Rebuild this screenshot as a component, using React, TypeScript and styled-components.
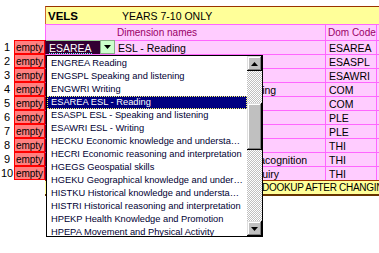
import React from 'react';
import styled, { createGlobalStyle } from 'styled-components';

const GlobalStyle = createGlobalStyle`
  html, body {
    margin: 0;
    padding: 0;
    background: #fff;
  }
  body {
    font-family: "Liberation Sans", Arial, sans-serif;
  }
`;

const Page = styled.div`
  position: relative;
  width: 379px;
  height: 253px;
  overflow: hidden;
  background: #fff;
`;

const Grid = styled.div`
  display: grid;
  grid-template-columns: 14px 31px 70px 210px 51px 1fr;
  grid-template-rows: 18px 16px repeat(10, 14px) 16px;
  padding-top: 6px;
  font-size: 10.5px;
  color: #000;
`;

type Band = 'yellow' | 'pink' | 'blank';

const Cell = styled.div<{ $band: Band; $line?: boolean; $pad?: number }>`
  box-sizing: border-box;
  display: flex;
  align-items: center;
  white-space: nowrap;
  overflow: hidden;
  padding-left: ${(p) => p.$pad ?? 2}px;
  background: ${(p) => (p.$band === 'yellow' ? '#ffff99' : p.$band === 'pink' ? '#ffccff' : '#fff')};
  border-top: ${(p) => (p.$band === 'pink' ? '1px solid #ff66ff' : p.$band === 'yellow' ? '1px solid #993300' : 'none')};
  border-left: ${(p) => (p.$line ? '1px solid #ff66ff' : 'none')};
`;

const TitleCell = styled(Cell)`
  font-weight: bold;
  font-size: 11.5px;
  border-left: 1px solid #cc6633;
`;

const CodeCell = styled(Cell)`
  border-left: 1px solid #660033;
`;

const HeadCorner = styled(Cell)`
  border-left: 1px solid #ff66ff;
`;

const HeadText = styled.span`
  color: #990066;
  font-size: 10px;
`;

const RowNum = styled.div`
  display: flex;
  align-items: center;
  justify-content: center;
  font-size: 11px;
`;

const EmptyCell = styled.div`
  box-sizing: border-box;
  display: flex;
  align-items: center;
  justify-content: center;
  background: #ff8080;
  border: 1px solid #ff0000;
  font-size: 10px;
`;

const Footer = styled.div`
  grid-column: 3 / -1;
  box-sizing: border-box;
  background: #ffff99;
  border-top: 1px solid #993300;
  border-bottom: 2px solid #663300;
  padding-left: 217px;
  font-size: 10px;
  letter-spacing: -0.3px;
  line-height: 13px;
  white-space: nowrap;
  overflow: hidden;
`;

const CodeWrap = styled.div`
  display: flex;
  background: #ffccff;
  border-left: 1px solid #660033;
`;

const ActiveCode = styled.div`
  box-sizing: border-box;
  width: 54px;
  background: #330033;
  border-top: 1px solid #99cc99;
  color: #fff;
  padding: 1px 0 0 3px;
  display: flex;
  align-items: center;
`;

const Selected = styled.span`
  border-bottom: 1px dotted #66ffff;
  line-height: 10px;
`;

const DropButton = styled.div`
  box-sizing: border-box;
  width: 15px;
  background: #ccffcc;
  border: 1px solid #88aa88;
  display: flex;
  align-items: center;
  justify-content: center;
`;

const DropList = styled.div`
  position: absolute;
  left: 46px;
  top: 55px;
  width: 217px;
  height: 182px;
  box-sizing: border-box;
  border: 1px solid #000;
  background: #fff;
  display: flex;
`;

const Items = styled.div`
  flex: 1;
  overflow: hidden;
  padding-top: 1px;
`;

const Item = styled.div<{ $active?: boolean }>`
  box-sizing: border-box;
  height: 13px;
  line-height: 12px;
  padding: 0 3px 0 4px;
  font-size: 9.3px;
  white-space: nowrap;
  overflow: hidden;
  text-overflow: ellipsis;
  color: ${(p) => (p.$active ? '#fff' : '#000033')};
  background: ${(p) => (p.$active ? '#000080' : 'transparent')};
  outline: ${(p) => (p.$active ? '1px dotted #ffff66' : 'none')};
  outline-offset: -1px;
`;

const Scrollbar = styled.div`
  width: 15px;
  display: flex;
  flex-direction: column;
`;

const ScrollButton = styled.div`
  height: 15px;
  background: #c0c0c0;
  box-shadow: inset -1px -1px #000, inset 1px 1px #dfdfdf, inset -2px -2px #808080, inset 2px 2px #fff;
  display: flex;
  align-items: center;
  justify-content: center;
`;

const Track = styled.div`
  flex: 1;
  background: repeating-conic-gradient(#c0c0c0 0 25%, #ffffff 0 50%) 0 0 / 2px 2px;
`;

const Thumb = styled.div<{ $offset: number; $size: number }>`
  margin-top: ${(p) => p.$offset}px;
  height: ${(p) => p.$size}px;
  background: #c0c0c0;
  box-shadow: inset -1px -1px #000, inset 1px 1px #dfdfdf, inset -2px -2px #808080, inset 2px 2px #fff;
`;

const Arrow = ({ up }: { up?: boolean }) => (
  <svg width="7" height="4" viewBox="0 0 7 4">
    <polygon points={up ? '3.5,0 7,4 0,4' : '0,0 7,0 3.5,4'} fill="#000" />
  </svg>
);

const rows = [
  { code: 'ESAREA', name: 'ESL - Reading', dom: 'ESAREA' },
  { code: 'ESASPL', name: 'ESL - Speaking and listening', dom: 'ESASPL' },
  { code: 'ESAWRI', name: 'ESL - Writing', dom: 'ESAWRI' },
  { code: 'COMLVR', name: 'Listening, viewing and responding', dom: 'COM' },
  { code: 'COMPRE', name: 'Presenting', dom: 'COM' },
  { code: 'PLEIND', name: 'The individual learner', dom: 'PLE' },
  { code: 'PLEMAN', name: 'Managing personal learning', dom: 'PLE' },
  { code: 'THICRE', name: 'Creativity', dom: 'THI' },
  { code: 'THIREF', name: 'Reflection, evaluation and metacognition', dom: 'THI' },
  { code: 'THIREA', name: 'Reasoning, processing and inquiry', dom: 'THI' },
];

const options = [
  'ENGREA Reading',
  'ENGSPL Speaking and listening',
  'ENGWRI Writing',
  'ESAREA ESL - Reading',
  'ESASPL ESL - Speaking and listening',
  'ESAWRI ESL - Writing',
  'HECKU Economic knowledge and understanding',
  'HECRI Economic reasoning and interpretation',
  'HGEGS Geospatial skills',
  'HGEKU Geographical knowledge and understanding',
  'HISTKU Historical knowledge and understanding',
  'HISTRI Historical reasoning and interpretation',
  'HPEKP Health Knowledge and Promotion',
  'HPEPA Movement and Physical Activity',
];

export default function App() {
  return (
    <Page>
      <GlobalStyle />
      <Grid>
        <Cell $band="blank" />
        <Cell $band="blank" />
        <TitleCell $band="yellow" $pad={2}>VELS</TitleCell>
        <Cell $band="yellow" $pad={7}>YEARS 7-10 ONLY</Cell>
        <Cell $band="yellow" />
        <Cell $band="yellow" />

        <Cell $band="blank" />
        <Cell $band="blank" />
        <HeadCorner $band="pink" />
        <Cell $band="pink"><HeadText>Dimension names</HeadText></Cell>
        <Cell $band="pink" $line><HeadText>Dom Code</HeadText></Cell>
        <Cell $band="pink" $line />

        {rows.map((r, i) => (
          <React.Fragment key={i}>
            <RowNum>{i + 1}</RowNum>
            <EmptyCell>empty</EmptyCell>
            {i === 0 ? (
              <CodeWrap>
                <ActiveCode><Selected>{r.code}</Selected></ActiveCode>
                <DropButton><Arrow /></DropButton>
              </CodeWrap>
            ) : (
              <CodeCell $band="pink">{r.code}</CodeCell>
            )}
            <Cell $band="pink" $pad={3}>{r.name}</Cell>
            <Cell $band="pink" $line $pad={3}>{r.dom}</Cell>
            <Cell $band="pink" $line />
          </React.Fragment>
        ))}

        <Cell $band="blank" />
        <Cell $band="blank" />
        <Footer>DOOKUP AFTER CHANGING</Footer>
      </Grid>

      <DropList>
        <Items>
          {options.map((o, i) => (
            <Item key={o} $active={i === 3}>{o}</Item>
          ))}
        </Items>
        <Scrollbar>
          <ScrollButton><Arrow up /></ScrollButton>
          <Track>
            <Thumb $offset={32} $size={47} />
          </Track>
          <ScrollButton><Arrow /></ScrollButton>
        </Scrollbar>
      </DropList>
    </Page>
  );
}
